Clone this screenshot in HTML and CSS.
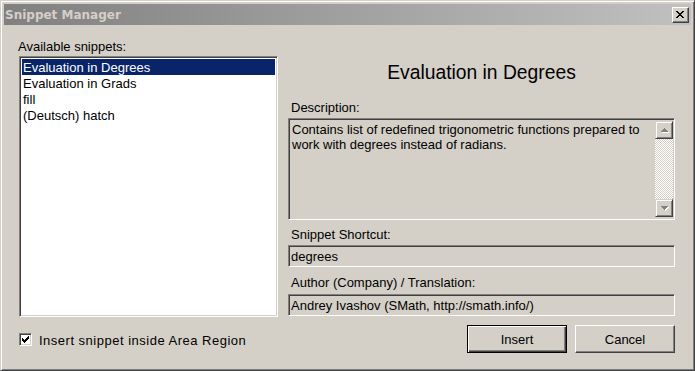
FILE: index.html
```html
<!DOCTYPE html>
<html lang="en">
<head>
    <meta charset="UTF-8">
    <title>Snippet Manager</title>
    <link rel="stylesheet" href="styles.css">
</head>
<body>
    <div class="window">
        <div class="titlebar">
            <span class="title">Snippet Manager</span>
            <div class="close-btn">
                <svg width="8" height="7" viewBox="0 0 8 7" shape-rendering="crispEdges">
                    <path d="M0 0h2v1h-2z M6 0h2v1h-2z M1 1h2v1h-2z M5 1h2v1h-2z M2 2h4v1h-4z M3 3h2v1h-2z M2 4h4v1h-4z M1 5h2v1h-2z M5 5h2v1h-2z M0 6h2v1h-2z M6 6h2v1h-2z" fill="#000"/>
                </svg>
            </div>
        </div>

        <div class="content">
            <!-- left side: list of snippets -->
            <div class="left-col">
                <div class="label list-label">Available snippets:</div>
                <div class="listbox">
                    <div class="list-item selected">Evaluation in Degrees</div>
                    <div class="list-item">Evaluation in Grads</div>
                    <div class="list-item">fill</div>
                    <div class="list-item">(Deutsch) hatch</div>
                </div>
                <div class="check-row">
                    <div class="checkbox">
                        <svg width="7" height="7" viewBox="0 0 7 7" shape-rendering="crispEdges">
                            <path d="M6 0h1v3h-1z M5 1h1v3h-1z M4 2h1v3h-1z M3 3h1v3h-1z M0 2h1v3h-1z M1 3h1v3h-1z M2 4h1v3h-1z" fill="#000"/>
                        </svg>
                    </div>
                    <span>Insert snippet inside Area Region</span>
                </div>
            </div>

            <!-- right side: details -->
            <div class="right-col">
                <div class="snippet-title">Evaluation in Degrees</div>

                <div class="label desc-label">Description:</div>
                <div class="textbox multiline">
                    <div class="desc-text">Contains list of redefined trigonometric functions prepared to work with degrees instead of radians.</div>
                    <div class="scrollbar">
                        <div class="scroll-btn">
                            <svg width="7" height="4" viewBox="0 0 7 4" shape-rendering="crispEdges">
                                <path d="M3 0h1v1h-1z M2 1h3v1h-3z M1 2h5v1h-5z M0 3h7v1h-7z" fill="#808080"/>
                            </svg>
                        </div>
                        <div class="scroll-track"></div>
                        <div class="scroll-btn">
                            <svg width="7" height="4" viewBox="0 0 7 4" shape-rendering="crispEdges">
                                <path d="M0 0h7v1h-7z M1 1h5v1h-5z M2 2h3v1h-3z M3 3h1v1h-1z" fill="#808080"/>
                            </svg>
                        </div>
                    </div>
                </div>

                <div class="label shortcut-label">Snippet Shortcut:</div>
                <div class="textbox single">degrees</div>

                <div class="label author-label">Author (Company) / Translation:</div>
                <div class="textbox single author-box">Andrey Ivashov (SMath, http://smath.info/)</div>

                <div class="buttons">
                    <div class="btn default"><span>Insert</span></div>
                    <div class="btn">Cancel</div>
                </div>
            </div>
        </div>
    </div>
</body>
</html>
```

FILE: styles.css
```css
body {
    margin: 0;
    font-family: "Liberation Sans", Arial, sans-serif;
    font-size: 13px;
    color: #000;
    background: #d4d0c8;
}
.window {
    width: 695px;
    height: 371px;
    box-sizing: border-box;
    background: #d4d0c8;
    border: 1px solid;
    border-color: #d4d0c8 #404040 #404040 #d4d0c8;
    box-shadow: inset 1px 1px #fff, inset -1px -1px #808080;
    padding: 3px;
    display: flex;
    flex-direction: column;
}
.titlebar {
    height: 21px;
    background: linear-gradient(to right, #808080, #c0c0c0);
    display: flex;
    align-items: center;
    justify-content: space-between;
    padding: 0 2px 0 1px;
}
.title {
    font-family: "DejaVu Sans", Tahoma, sans-serif;
    font-weight: bold;
    font-size: 12px;
    color: #d4d0c8;
}
.close-btn {
    width: 17px;
    height: 16px;
    box-sizing: border-box;
    background: #d4d0c8;
    border: 1px solid;
    border-color: #fff #404040 #404040 #fff;
    box-shadow: inset -1px -1px #808080;
    display: flex;
    align-items: center;
    justify-content: center;
    padding: 0 1px 1px 0;
}
.content {
    flex: 1;
    display: flex;
    gap: 10px;
    padding: 0 15px;
}
.left-col {
    width: 259px;
    padding-top: 14px;
}
.label {
    height: 16px;
    line-height: 16px;
    padding-left: 3px;
}
.list-label {
    padding-left: 0;
    margin-left: -1px;
}
.listbox {
    margin-top: 1px;
    height: 261px;
    box-sizing: border-box;
    background: #fff;
    border: 1px solid;
    border-color: #808080 #fff #fff #808080;
    box-shadow: inset 1px 1px #404040, inset -1px -1px #d4d0c8;
    padding: 2px;
}
.list-item {
    height: 16px;
    line-height: 17px;
    padding-left: 1px;
}
.list-item.selected {
    background: #0a246a;
    color: #fff;
}
.check-row {
    margin-top: 16px;
    display: flex;
    align-items: center;
    gap: 7px;
    height: 13px;
    line-height: 13px;
}
.check-row span {
    padding-top: 2px;
    letter-spacing: 0.5px;
}
.checkbox {
    width: 13px;
    height: 13px;
    box-sizing: border-box;
    background: #fff;
    border: 1px solid;
    border-color: #808080 #fff #fff #808080;
    box-shadow: inset 1px 1px #404040, inset -1px -1px #d4d0c8;
    display: flex;
    align-items: center;
    justify-content: center;
}
.right-col {
    width: 387px;
}
.snippet-title {
    margin-top: 37px;
    height: 22px;
    line-height: 22px;
    font-size: 19.3px;
    text-align: center;
}
.desc-label {
    margin-top: 16px;
}
.textbox {
    box-sizing: border-box;
    background: #d4d0c8;
    border: 1px solid;
    border-color: #808080 #fff #fff #808080;
    box-shadow: inset 1px 1px #404040, inset -1px -1px #d4d0c8;
}
.multiline {
    margin-top: 2px;
    height: 102px;
    display: flex;
    padding: 2px 1px 2px 2px;
}
.desc-text {
    flex: 1;
    padding: 1px 2px 0 1px;
    line-height: 15px;
}
.scrollbar {
    width: 18px;
    display: flex;
    flex-direction: column;
}
.scroll-btn {
    height: 18px;
    box-sizing: border-box;
    background: #d4d0c8;
    border: 1px solid;
    border-color: #d4d0c8 #404040 #404040 #d4d0c8;
    box-shadow: inset 1px 1px #fff, inset -1px -1px #808080;
    display: flex;
    align-items: center;
    justify-content: center;
}
.scroll-btn svg {
    filter: drop-shadow(1px 1px 0 #fff);
}
.scroll-track {
    flex: 1;
    background: repeating-conic-gradient(#fff 0 25%, #d4d0c8 0 50%) 0 0 / 2px 2px;
}
.shortcut-label {
    margin-top: 7px;
}
.single {
    margin-top: 2px;
    height: 22px;
    line-height: 20px;
    padding: 1px 3px 0 2px;
}
.author-label {
    margin-top: 8px;
}
.author-box {
    margin-top: 3px;
}
.buttons {
    margin-top: 9px;
    display: flex;
    justify-content: flex-end;
    gap: 8px;
}
.btn {
    width: 100px;
    height: 28px;
    box-sizing: border-box;
    background: #d4d0c8;
    border: 1px solid;
    border-color: #fff #404040 #404040 #fff;
    box-shadow: inset -1px -1px #808080;
    display: flex;
    align-items: center;
    justify-content: center;
}
.btn.default {
    border: 1px solid #000;
    box-shadow: inset 1px 1px #fff, inset -1px -1px #404040, inset -2px -2px #808080;
}
```
